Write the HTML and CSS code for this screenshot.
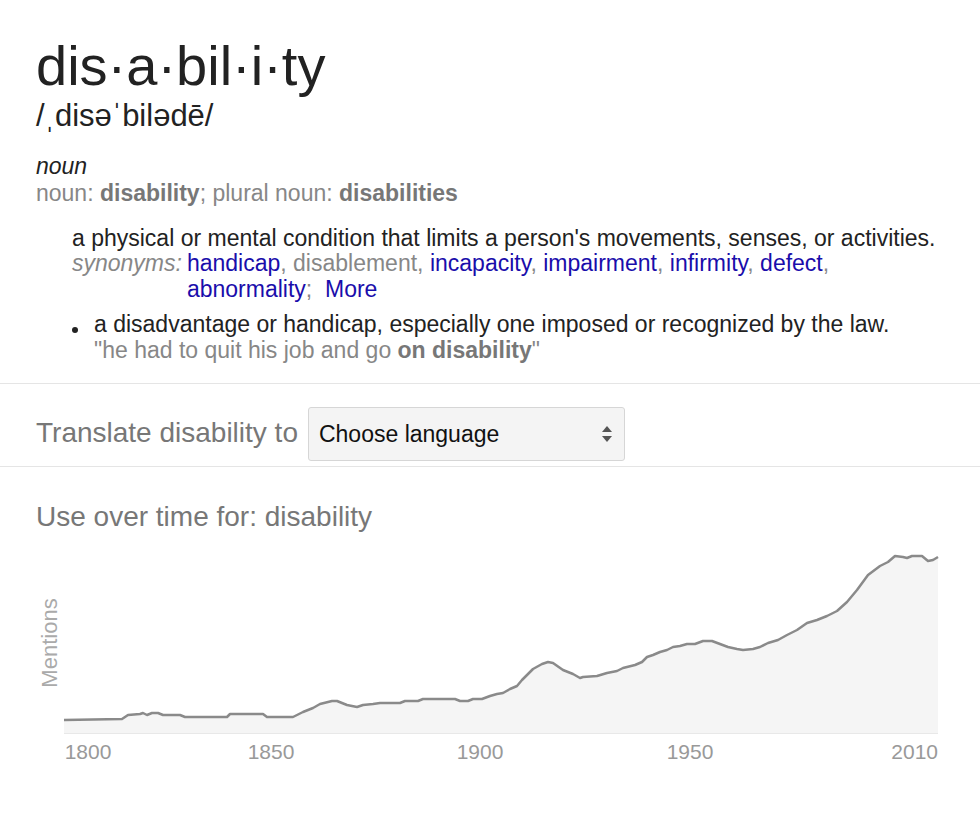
FILE: index.html
```html
<!DOCTYPE html>
<html>
<head>
<meta charset="utf-8">
<link rel="stylesheet" href="styles.css">
</head>
<body>
<div class="entry">
  <div class="head">
    <h1 class="word">dis<span class="dot">·</span>a<span class="dot">·</span>bil<span class="dot">·</span>i<span class="dot">·</span>ty</h1>
    <div class="pron">/ˌdisəˈbilədē/</div>
  </div>
  <div class="pos">
    <div class="pos-name">noun</div>
    <div class="forms">noun: <b>disability</b>; plural noun: <b>disabilities</b></div>
  </div>
  <ol class="senses">
    <li class="sense first">
      <div class="def">a physical or mental condition that limits a person's movements, senses, or activities.</div>
      <div class="syn">
        <span class="syn-label">synonyms:</span>
        <span class="syn-list"><a href="#">handicap</a>, disablement, <a href="#">incapacity</a>, <a href="#">impairment</a>, <a href="#">infirmity</a>, <a href="#">defect</a>, <a href="#">abnormality</a>;&nbsp; <a href="#">More</a></span>
      </div>
    </li>
    <li class="sense bullet">
      <div class="def">a disadvantage or handicap, especially one imposed or recognized by the law.</div>
      <div class="example">"he had to quit his job and go <b>on disability</b>"</div>
    </li>
  </ol>
</div>
<div class="translate">
  <span class="tr-label">Translate disability to</span>
  <div class="select">
    <span class="select-text">Choose language</span>
    <svg class="arrows" width="12" height="20" viewBox="0 0 12 20"><path d="M6 2 L11 8 L1 8 Z" fill="#555"/><path d="M1 12 L11 12 L6 18 Z" fill="#555"/></svg>
  </div>
</div>
<div class="usage">
  <div class="usage-title">Use over time for: disability</div>
  <svg class="chart" width="980" height="250" viewBox="0 540 980 250">
    <path class="area" d="M64,733 L64,720 122,719 128,715 140,714 143,713 147,715 152,713 158,713 163,715 180,715 185,717 227,717 230,714 263,714 267,717 293,717 303,712 313,708 320,704 332,701 337,701 347,705 357,707 363,705 373,704 380,703 400,703 405,701 418,701 423,699 455,699 460,701 468,701 473,699 482,699 490,696 497,694 503,693 510,689 517,686 522,680 533,669 542,664 548,662 553,663 563,670 573,674 580,678 583,677 597,676 607,673 617,671 623,668 635,665 642,662 647,657 653,655 660,652 667,650 673,647 680,646 687,644 695,644 703,641 712,641 720,644 728,647 737,649 743,650 753,649 760,647 768,643 778,640 787,635 797,630 807,623 817,620 827,616 837,611 847,602 857,590 868,575 880,566 888,562 895,556 903,557 907,558 912,556 922,556 928,561 933,560 938,557 L938,733 Z"/>
    <line class="base" x1="64" y1="733.5" x2="938" y2="733.5"/>
    <polyline class="line" points="64,720 122,719 128,715 140,714 143,713 147,715 152,713 158,713 163,715 180,715 185,717 227,717 230,714 263,714 267,717 293,717 303,712 313,708 320,704 332,701 337,701 347,705 357,707 363,705 373,704 380,703 400,703 405,701 418,701 423,699 455,699 460,701 468,701 473,699 482,699 490,696 497,694 503,693 510,689 517,686 522,680 533,669 542,664 548,662 553,663 563,670 573,674 580,678 583,677 597,676 607,673 617,671 623,668 635,665 642,662 647,657 653,655 660,652 667,650 673,647 680,646 687,644 695,644 703,641 712,641 720,644 728,647 737,649 743,650 753,649 760,647 768,643 778,640 787,635 797,630 807,623 817,620 827,616 837,611 847,602 857,590 868,575 880,566 888,562 895,556 903,557 907,558 912,556 922,556 928,561 933,560 938,557"/>
    <text class="ylabel" transform="translate(57,643) rotate(-90)" text-anchor="middle">Mentions</text>
    <text class="xlabel" x="88" y="759" text-anchor="middle">1800</text>
    <text class="xlabel" x="271" y="759" text-anchor="middle">1850</text>
    <text class="xlabel" x="480" y="759" text-anchor="middle">1900</text>
    <text class="xlabel" x="690" y="759" text-anchor="middle">1950</text>
    <text class="xlabel" x="938" y="759" text-anchor="end">2010</text>
  </svg>
</div>
</body>
</html>
```
FILE: styles.css
```css
html, body {
  margin: 0;
  padding: 0;
  background: #fff;
}
body {
  font-family: "Liberation Sans", Arial, sans-serif;
  color: #222;
  width: 980px;
  height: 824px;
  overflow: hidden;
}
.entry {
  padding: 36px 40px 0 36px;
}
.word {
  margin: 0;
  font-size: 56px;
  font-weight: normal;
  line-height: 60px;
  color: #222;
}
.pron {
  font-size: 31px;
  line-height: 40px;
  color: #222;
}
.pos {
  margin-top: 17px;
}
.pos-name {
  font-style: italic;
  font-size: 23px;
  line-height: 27px;
  color: #222;
}
.forms {
  font-size: 23px;
  line-height: 26px;
  color: #878787;
}
.forms b {
  color: #777;
}
.senses {
  list-style: none;
  margin: 19.5px 0 0 0;
  padding: 0 0 0 36px;
}
.sense {
  font-size: 23px;
  line-height: 25.5px;
  position: relative;
}
.sense .def {
  color: #222;
}
.sense.bullet {
  margin-top: 10px;
  padding-left: 22px;
}
.sense.bullet::before {
  content: "";
  position: absolute;
  left: 0;
  top: 15px;
  width: 6px;
  height: 6px;
  border-radius: 50%;
  background: #222;
}
.syn {
  display: flex;
  gap: 5px;
}
.syn-label {
  font-style: italic;
  color: #878787;
  white-space: nowrap;
}
.syn-list {
  color: #878787;
}
.syn-list a {
  color: #1a0dab;
  text-decoration: none;
}
.example {
  color: #878787;
}
.example b {
  color: #777;
}
.translate {
  margin-top: 20px;
  border-top: 1px solid #e5e5e5;
  border-bottom: 1px solid #e5e5e5;
  padding: 23px 0 5px 36px;
  display: flex;
  align-items: baseline;
  gap: 10px;
}
.tr-label {
  font-size: 28px;
  color: #777;
}
.select {
  box-sizing: border-box;
  width: 317px;
  height: 54px;
  background: #f4f4f4;
  border: 1px solid #d6d6d6;
  border-radius: 3px;
  display: flex;
  align-items: center;
  justify-content: space-between;
  padding: 0 11px 0 10px;
  font-size: 23px;
  color: #111;
}
.arrows {
  display: block;
}
.usage {
  padding-top: 34px;
}
.usage-title {
  padding-left: 36px;
  font-size: 28px;
  line-height: 32px;
  color: #777;
}
.chart {
  display: block;
  margin-top: 7px;
}
.chart .area {
  fill: #f5f5f5;
}
.chart .base {
  stroke: #e8e8e8;
  stroke-width: 1;
}
.chart .line {
  fill: none;
  stroke: #8a8a8a;
  stroke-width: 2.5;
  stroke-linejoin: round;
}
.chart .ylabel {
  font-family: "Liberation Sans", Arial, sans-serif;
  font-size: 22px;
  fill: #aaa;
}
.chart .xlabel {
  font-family: "Liberation Sans", Arial, sans-serif;
  font-size: 21px;
  fill: #999;
}
```
